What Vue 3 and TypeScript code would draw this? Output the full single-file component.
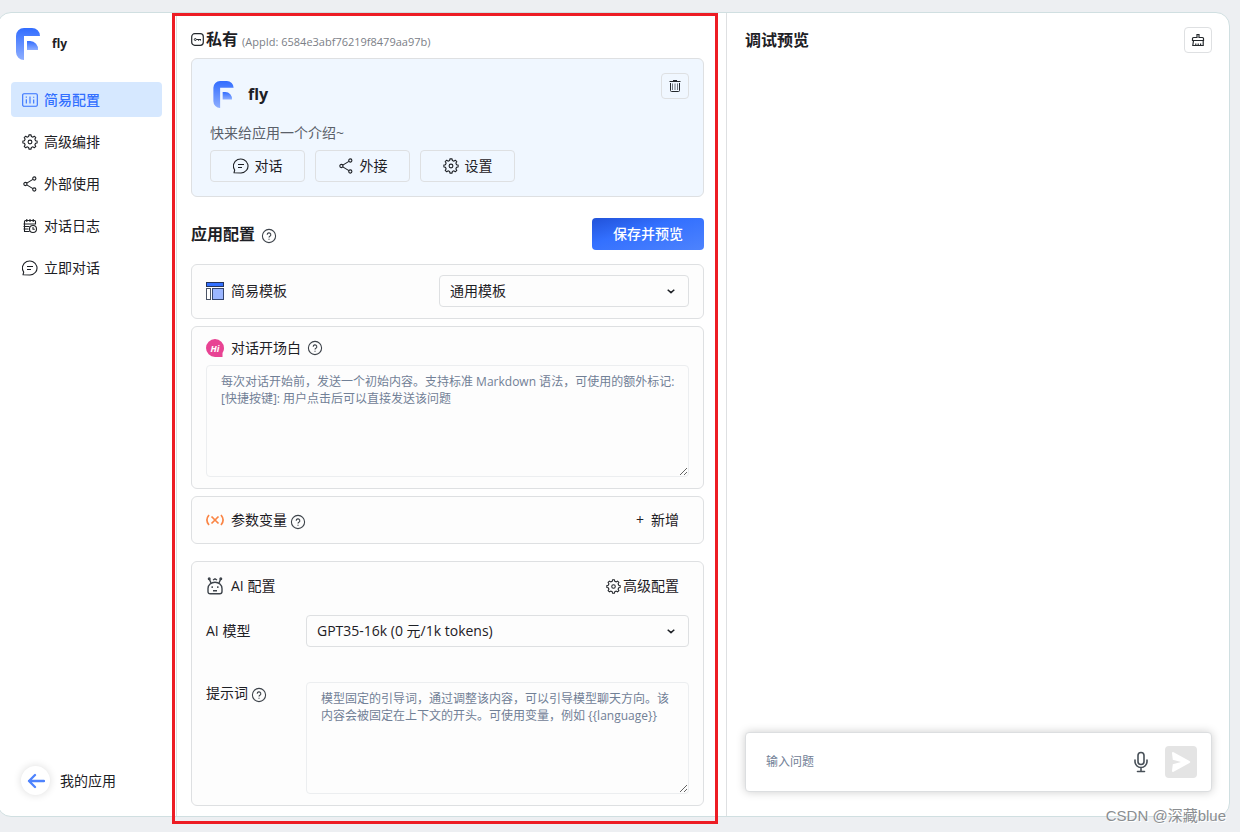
<script setup lang="ts">
import { defineComponent, h, ref } from 'vue'

type IconName = 'config' | 'gear' | 'share' | 'log' | 'chat' | 'help' | 'chevron'

function cogPath(teeth: number, outer: number, inner: number): string {
  const step = (Math.PI * 2) / teeth
  const points: string[] = []
  for (let i = 0; i < teeth; i++) {
    const center = i * step - Math.PI / 2
    const corners: [number, number][] = [
      [-0.3, inner],
      [-0.19, outer],
      [0.19, outer],
      [0.3, inner],
    ]
    for (const [offset, radius] of corners) {
      const angle = center + offset * step
      points.push(`${(8 + radius * Math.cos(angle)).toFixed(2)} ${(8 + radius * Math.sin(angle)).toFixed(2)}`)
    }
  }
  return `M${points.join('L')}Z`
}

const iconMarkup: Record<IconName, string> = {
  config:
    '<rect x=".7" y="1.700" width="14.600" height="12.600" rx="1.200"/><path d="M4.300 4.500v1.300M4.300 7.300v4.200M8 4.500v7M11.700 7.500v4M11.700 4.800v1" />',
  gear: `<path d="${cogPath(8, 7.2, 5.7)}"/><circle cx="8" cy="8" r="1.900"/>`,
  share:
    '<circle cx="3.400" cy="8" r="1.600"/><circle cx="12.300" cy="2.500" r="1.600"/><circle cx="12.300" cy="13.500" r="1.600"/><path d="M4.800 7.100L10.900 3.400M4.800 8.900l6.100 3.700"/>',
  log:
    '<path d="M13.500 6.500V3.500a1 1 0 0 0-1-1h-9a1 1 0 0 0-1 1v10h5M4.800 1v3M8 1v3M11.200 1v3M1.500 6h12M1.500 8.500h6M1.500 11h5"/><circle cx="11" cy="11" r="3.500"/><path d="M11 9v2.200h1.800"/>',
  chat:
    '<path d="M1 14.800l.7-2.800A7.300 7 0 1 1 8 15z"/><path d="M5 6.500h6M5 9.500h4"/>',
  help:
    '<circle cx="8" cy="8" r="6.600"/><path d="M6.200 6.700a1.800 1.800 0 1 1 2.700 1.500c-.7.400-.9.700-.9 1.300M8 10.700v1"/>',
  chevron: '<path d="M4.700 6.700L8 9.600l3.300-2.900" stroke-width="1.500"/>',
}

const Icon = defineComponent({
  props: { name: { type: String, required: true } },
  setup(props) {
    return () =>
      h('svg', {
        viewBox: '0 0 16 16',
        fill: 'none',
        stroke: 'currentColor',
        'stroke-width': '1.1',
        'stroke-linejoin': 'round',
        'aria-hidden': 'true',
        innerHTML: iconMarkup[props.name as IconName],
      })
  },
})

const navItems: { label: string; icon: IconName }[] = [
  { label: '简易配置', icon: 'config' },
  { label: '高级编排', icon: 'gear' },
  { label: '外部使用', icon: 'share' },
  { label: '对话日志', icon: 'log' },
  { label: '立即对话', icon: 'chat' },
]
const actions: { label: string; icon: IconName }[] = [
  { label: '对话', icon: 'chat' },
  { label: '外接', icon: 'share' },
  { label: '设置', icon: 'gear' },
]

const activeNav = ref('简易配置')
const template = ref('通用模板')
const model = ref('GPT35-16k (0 元/1k tokens)')
const welcome = ref('')
const prompt = ref('')
const question = ref('')
const welcomeHint =
  '每次对话开始前，发送一个初始内容。支持标准 Markdown 语法，可使用的额外标记:\n[快捷按键]: 用户点击后可以直接发送该问题'
const promptHint =
  '模型固定的引导词，通过调整该内容，可以引导模型聊天方向。该内容会被固定在上下文的开头。可使用变量，例如 {{language}}'
</script>

<template>
  <div class="page">
    <div class="panel">
      <aside class="sidebar">
        <div class="brand">
          <svg class="brand-logo" viewBox="0 0 24 32" aria-hidden="true">
            <defs>
              <linearGradient id="logoFill" x1="0" y1="0" x2="0" y2="1">
                <stop offset="0" stop-color="#326dff" />
                <stop offset="1" stop-color="#8eaeff" />
              </linearGradient>
            </defs>
            <path d="M0 8a8 8 0 0 1 8-8h8a8 8 0 0 1 8 8H8v24a8 8 0 0 1-8-8z" fill="url(#logoFill)" />
            <path d="M11 13h3a8 8 0 0 1 8 9H11z" fill="url(#logoFill)" />
          </svg>
          <strong>fly</strong>
        </div>
        <nav class="nav">
          <a
            v-for="item in navItems"
            :key="item.label"
            href="#"
            :class="{ active: item.label === activeNav }"
            @click.prevent="activeNav = item.label"
          >
            <Icon :name="item.icon" class="icon" />{{ item.label }}
          </a>
        </nav>
        <a class="back" href="#">
          <span class="back-circle">
            <svg viewBox="0 0 18 16" aria-hidden="true">
              <path d="M8 2L2 8l6 6M2 8h15" fill="none" stroke="#4e83fd" stroke-width="2.300" stroke-linecap="round" stroke-linejoin="round" />
            </svg>
          </span>
          我的应用
        </a>
      </aside>

      <main class="config">
        <header class="config-head">
          <svg class="private" viewBox="0 0 13 13" aria-hidden="true">
            <rect x=".7" y=".7" width="11.600" height="11.600" rx="3" fill="none" stroke="#24282c" stroke-width="1.200" />
            <circle cx="4.300" cy="6.500" r="1" fill="none" stroke="#24282c" />
            <path d="M5.300 6.500H10M7.500 6.500v1.200M9.300 6.500v1.200" fill="none" stroke="#24282c" />
          </svg>
          <h1>私有</h1>
          <span class="app-id">(AppId: 6584e3abf76219f8479aa97b)</span>
        </header>

        <section class="app-card">
          <div class="app-title">
            <svg class="card-logo" viewBox="0 0 24 32" aria-hidden="true">
              <path d="M0 8a8 8 0 0 1 8-8h8a8 8 0 0 1 8 8H8v24a8 8 0 0 1-8-8z" fill="url(#logoFill)" />
              <path d="M11 13h3a8 8 0 0 1 8 9H11z" fill="url(#logoFill)" />
            </svg>
            <h2>fly</h2>
            <button class="square-btn" type="button" aria-label="删除">
              <svg viewBox="0 0 14 14" fill="none" stroke="#24282c" aria-hidden="true">
                <path d="M1.500 2.500h11M5 1.500h4" />
                <path d="M2.500 4v7.500a1 1 0 0 0 1 1h7a1 1 0 0 0 1-1V4" />
                <path d="M4.500 4.500v6.500M7 4.500v6.500M9.500 4.500v6.500" stroke="#70767d" />
              </svg>
            </button>
          </div>
          <p>快来给应用一个介绍~</p>
          <div class="actions">
            <button v-for="a in actions" :key="a.label" type="button">
              <Icon :name="a.icon" class="icon" />{{ a.label }}
            </button>
          </div>
        </section>

        <div class="section-head">
          <h2>应用配置</h2>
          <Icon name="help" class="help low" />
          <button class="save" type="button">保存并预览</button>
        </div>

        <section class="box template-box">
          <svg class="box-icon" viewBox="0 0 18 18" aria-hidden="true">
            <rect x=".5" y=".5" width="17" height="4" fill="#3370ff" stroke="#24345c" />
            <rect x=".5" y="6.500" width="4" height="11" fill="#fff" stroke="#4b5465" />
            <rect x="6.500" y="6.500" width="11" height="11" fill="#9bb6ff" stroke="#34456e" />
          </svg>
          <label for="template">简易模板</label>
          <div class="select template-select">
            <select id="template" v-model="template"><option>通用模板</option></select>
            <Icon name="chevron" class="chevron" />
          </div>
        </section>

        <section class="box welcome-box">
          <div class="row">
            <svg class="box-icon" viewBox="0 0 18 18" aria-hidden="true">
              <path d="M9 0a9 9 0 0 1 9 9c0 2-.6 3.500-1.500 5V18H9A9 9 0 0 1 9 0z" fill="#e84393" />
              <text x="9" y="12.500" class="hi" text-anchor="middle">Hi</text>
            </svg>
            <label for="welcome">对话开场白</label>
            <Icon name="help" class="help" />
          </div>
          <textarea id="welcome" v-model="welcome" :placeholder="welcomeHint"></textarea>
        </section>

        <section class="box variable-box">
          <svg class="box-icon" viewBox="0 0 18 18" fill="none" stroke="#fa8545" stroke-width="1.700" aria-hidden="true">
            <path d="M3 4Q-1.200 9 3 14M15 4q4.200 5 0 10M5.500 5.500l7 7M12.500 5.500l-7 7" />
          </svg>
          <span>参数变量</span>
          <Icon name="help" class="help close low" />
          <button class="link-btn add" type="button"><span>+</span>新增</button>
        </section>

        <section class="box ai-box">
          <div class="row">
            <svg class="box-icon" viewBox="0 0 18 18" fill="none" stroke="#3d434a" stroke-width="1.400" aria-hidden="true">
              <path d="M2 14.500V11.500a7 6.300 0 0 1 14 0v3q0 2.300-2.300 2.300H4.300Q2 16.800 2 14.500z" />
              <path d="M5 6L3.500 2.500M13 6l1.500-3.500M7 3L9 1.800 11 3" />
              <circle cx="3.200" cy="1.800" r=".8" /><circle cx="14.800" cy="1.800" r=".8" />
              <path d="M6.200 9.300v1.700M11.800 9.300v1.700M7 13.700h4" />
            </svg>
            <span>AI 配置</span>
            <button class="link-btn" type="button"><Icon name="gear" class="small-gear" />高级配置</button>
          </div>
          <div class="field model-field">
            <label for="model">AI 模型</label>
            <div class="select">
              <select id="model" v-model="model"><option>GPT35-16k (0 元/1k tokens)</option></select>
              <Icon name="chevron" class="chevron" />
            </div>
          </div>
          <div class="field prompt-field">
            <div class="field-label">
              <label for="prompt">提示词</label>
              <Icon name="help" class="help close low" />
            </div>
            <textarea id="prompt" v-model="prompt" :placeholder="promptHint"></textarea>
          </div>
        </section>
        <div class="highlight"></div>
      </main>

      <section class="preview">
        <header>
          <h2>调试预览</h2>
          <button class="square-btn" type="button" aria-label="清空">
            <svg viewBox="0 0 14 14" fill="none" stroke="#24282c" stroke-width="1.200" aria-hidden="true">
              <path d="M6 4.500V1.500h2v3h3.500q1 0 1 1V7.500h-11V5.500q0-1 1-1zM2.500 7.500L1.800 12.500h10.400V7.500M4.800 12.500v-2M7.200 12.500v-2M9.600 12.500v-2" />
            </svg>
          </button>
        </header>
        <form class="chat-box" @submit.prevent>
          <input v-model="question" type="text" placeholder="输入问题" aria-label="输入问题" />
          <button class="mic" type="button" aria-label="语音输入">
            <svg viewBox="0 0 16 22" fill="none" stroke="#485058" stroke-width="1.600" stroke-linecap="round" aria-hidden="true">
              <rect x="5" y="1.500" width="6" height="12" rx="3" />
              <path d="M2 9v1.500a6 6 0 0 0 12 0V9M8 16.500V20M4.500 20.500h7" />
            </svg>
          </button>
          <button class="send" type="submit" aria-label="发送">
            <svg viewBox="0 0 20 22" aria-hidden="true">
              <path d="M1 2.200Q1 .5 2.600 1.200L18.500 10q1.500 1 0 2L2.600 20.800Q1 21.500 1 19.800l.8-6.500L10 11 1.800 8.700z" fill="#fff" />
            </svg>
          </button>
        </form>
      </section>
    </div>
    <div class="watermark">CSDN @深藏blue</div>
  </div>
</template>

<style>
body {
  margin: 0;
  background: #edeff2;
}
</style>

<style scoped>
* {
  box-sizing: border-box;
}
.page {
  position: relative;
  min-height: 100vh;
  padding: 12px 10px 15px 0;
  overflow: hidden;
  color: #1d2025;
  font-family: 'Open Sans', 'Noto Sans CJK SC', sans-serif;
  font-size: 14px;
  line-height: 20px;
}
button,
input,
select,
textarea {
  font: inherit;
  color: inherit;
}
button {
  padding: 0;
  border: 0;
  background: none;
  cursor: pointer;
}
a {
  color: inherit;
  text-decoration: none;
}
h1,
h2,
p {
  margin: 0;
}
h1,
h2 {
  font-size: 16px;
  line-height: 20px;
  font-weight: 700;
}
svg {
  display: block;
  flex: none;
}
.panel {
  display: grid;
  grid-template-columns: 179px minmax(0, 549fr) minmax(0, 503fr);
  min-height: calc(100vh - 27px);
  margin-left: -3px;
  border: 1px solid #d0dfe1;
  border-radius: 14px;
  background: #fff;
}
.icon {
  width: 16px;
  height: 16px;
}

.sidebar {
  display: flex;
  flex-direction: column;
  padding: 15px 14px 21px 13px;
  border-right: 1px solid #dee0e2;
}
.brand {
  display: flex;
  align-items: center;
  gap: 12px;
  padding-left: 5px;
  margin-bottom: 22px;
  font-size: 12px;
}
.brand-logo {
  width: 24px;
  height: 32px;
}
.nav {
  display: flex;
  flex-direction: column;
  gap: 7px;
}
.nav a {
  display: flex;
  align-items: center;
  gap: 6px;
  height: 35px;
  padding-left: 11px;
  border-radius: 4px;
}
.nav a.active {
  background: #d6e8ff;
  color: #3370ff;
  font-weight: 500;
}
.back {
  display: flex;
  align-items: center;
  gap: 10px;
  margin-top: auto;
  padding-left: 10px;
}
.back-circle {
  display: grid;
  place-items: center;
  width: 29px;
  height: 29px;
  border-radius: 50%;
  background: #fff;
  box-shadow: 0 0 8px rgba(0, 0, 0, 0.14);
}
.back-circle svg {
  width: 18px;
  height: 16px;
}

.config {
  position: relative;
  padding: 16px 22px 10px 14px;
}
.highlight {
  position: absolute;
  inset: 0 8px -8px -5px;
  border: 3px solid #ed1c24;
  pointer-events: none;
}
.config-head {
  display: flex;
  align-items: center;
  margin-bottom: 9px;
}
.private {
  width: 13px;
  height: 13px;
  margin-right: 2px;
}
.app-id {
  padding-top: 6px;
  margin-left: 4px;
  color: #7b8087;
  font-size: 11px;
  line-height: 14px;
}
.app-card {
  padding: 14px 14px 14px 18px;
  border: 1px solid #dee0e2;
  border-radius: 6px;
  background: #f0f7ff;
}
.app-title {
  display: flex;
  align-items: center;
  min-height: 42px;
  padding-left: 3px;
  gap: 14px;
}
.card-logo {
  width: 21px;
  height: 27px;
}
.square-btn {
  display: grid;
  place-items: center;
  width: 28px;
  height: 26px;
  margin-left: auto;
  border: 1px solid #dee0e2;
  border-radius: 4px;
}
.square-btn svg {
  width: 14px;
  height: 14px;
}
.app-title .square-btn {
  align-self: flex-start;
}
.app-card p {
  margin: 8px 0 7px;
  color: #5a6069;
}
.actions {
  display: flex;
  gap: 10px;
}
.actions button {
  display: flex;
  align-items: center;
  justify-content: center;
  gap: 6px;
  width: 95px;
  height: 32px;
  border: 1px solid #dee0e2;
  border-radius: 4px;
}
.section-head {
  display: flex;
  align-items: center;
  margin: 21px 0 14px;
}
.help {
  width: 16px;
  height: 16px;
  margin-left: 6px;
  color: #3d434a;
}
.help.close {
  margin-left: 3px;
}
.help.low {
  margin-top: 4px;
}
.save {
  width: 112px;
  height: 32px;
  margin-left: auto;
  border-radius: 4px;
  background: linear-gradient(to bottom right, #2152d9 0%, #3370ff 40%, #4e83fd 100%);
  color: #fff;
  font-weight: 500;
}
.box {
  margin-bottom: 7px;
  padding: 10px 14px 11px;
  border: 1px solid #dee0e2;
  border-radius: 6px;
  background: #fdfdfd;
}
.box-icon {
  width: 18px;
  height: 18px;
  margin-right: 7px;
}
.hi {
  fill: #fff;
  font-size: 9px;
  font-style: italic;
  font-weight: 700;
}
.row {
  display: flex;
  align-items: center;
  height: 22px;
}
.template-box,
.variable-box {
  display: flex;
  align-items: center;
}
.variable-box {
  min-height: 48px;
  margin-bottom: 17px;
  padding-top: 0;
  padding-bottom: 0;
}
.select {
  position: relative;
  flex: 1;
}
.template-select {
  flex: none;
  width: 250px;
  margin-left: auto;
}
select {
  appearance: none;
  display: block;
  width: 100%;
  height: 32px;
  padding: 0 32px 0 10px;
  border: 1px solid #dee0e2;
  border-radius: 4px;
  background: #fdfdfd;
}
.chevron {
  position: absolute;
  top: 8px;
  right: 10px;
  width: 16px;
  height: 16px;
  pointer-events: none;
}
textarea {
  display: block;
  width: 100%;
  height: 112px;
  padding: 7px 8px 7px 14px;
  border: 1px solid #eceef0;
  border-radius: 4px;
  background: #fdfdfd;
  font-size: 12px;
  line-height: 17px;
  resize: vertical;
}
::placeholder {
  color: #718096;
  opacity: 1;
}
.welcome-box textarea {
  margin-top: 6px;
}
.link-btn {
  display: flex;
  align-items: center;
  gap: 2px;
  margin-left: auto;
  padding-right: 10px;
}
.link-btn.add {
  gap: 7px;
}
.small-gear {
  width: 15px;
  height: 15px;
}
.ai-box {
  margin-bottom: 0;
  padding-top: 13px;
}
.field {
  display: flex;
}
.field > :first-child {
  flex: none;
  width: 100px;
}
.model-field {
  align-items: center;
  margin: 18px 0 35px;
}
.prompt-field textarea {
  padding-right: 14px;
}
.field-label {
  display: flex;
  align-items: center;
  height: 22px;
}

.preview {
  display: flex;
  flex-direction: column;
  padding: 14px 17px 24px 18px;
  border-left: 1px solid #dee0e2;
}
.preview header {
  display: flex;
  align-items: center;
}
.chat-box {
  display: flex;
  align-items: center;
  height: 60px;
  margin-top: auto;
  padding: 0 14px 0 20px;
  border: 1px solid #dcdee0;
  border-radius: 4px;
  background: #fff;
  box-shadow: 0 0 10px rgba(0, 0, 0, 0.2);
}
.chat-box input {
  flex: 1;
  min-width: 0;
  padding: 0;
  border: 0;
  outline: 0;
  background: none;
  font-size: 12px;
}
.mic svg {
  width: 16px;
  height: 22px;
}
.send {
  display: grid;
  place-items: center;
  width: 32px;
  height: 32px;
  margin-left: 16px;
  border-radius: 4px;
  background: #e4e4e4;
}
.send svg {
  width: 20px;
  height: 22px;
}
.watermark {
  position: absolute;
  right: 14px;
  bottom: 6px;
  color: #8b8e91;
  font-family: 'Liberation Sans', 'Noto Sans CJK SC', sans-serif;
  font-size: 15px;
  text-shadow: 1px 1px 0 #fff;
}
</style>
